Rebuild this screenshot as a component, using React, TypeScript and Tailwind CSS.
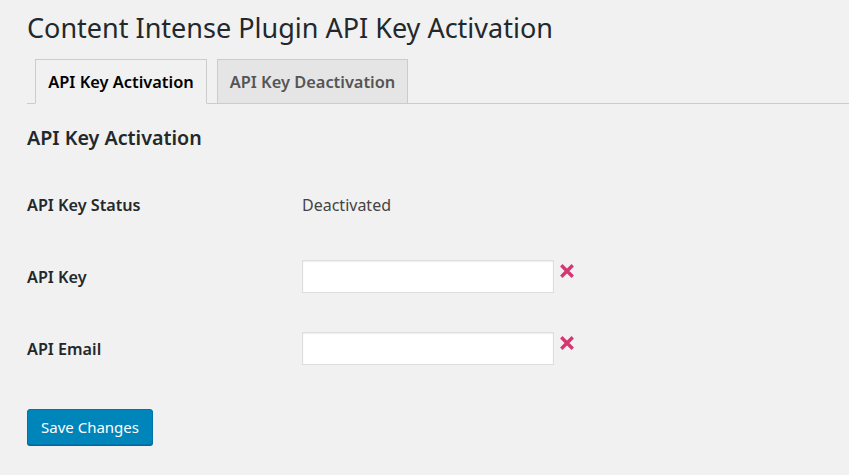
import type { ReactNode } from 'react';

const font = { fontFamily: '"Noto Sans", "Open Sans", Arial, sans-serif' };

const RemoveIcon = (): ReactNode => (
  <svg width="14" height="14" viewBox="0 0 14 14" aria-hidden="true" className="mt-[3px] ml-[6px] shrink-0">
    <path d="M2.5 2.5 L11.5 11.5 M11.5 2.5 L2.5 11.5" stroke="#d63672" strokeWidth="3.4" strokeLinecap="square" />
  </svg>
);

const FieldRow = ({ label, children }: { label: string; children: ReactNode }): ReactNode => (
  <div className="flex h-[72px] items-center">
    <div className="w-[275px] text-[16.2px] font-semibold text-[#23282d]">{label}</div>
    <div className="flex items-start">{children}</div>
  </div>
);

export default function App(): ReactNode {
  return (
    <div style={font} className="min-h-[475px] w-[849px] overflow-hidden bg-[#f1f1f1] pl-[27px]">
      <h1 className="pt-[10px] text-[27px] leading-[36px] font-normal text-[#23282d]">
        Content Intense Plugin API Key Activation
      </h1>

      {/* tabs */}
      <nav className="mt-[13px] flex h-[45px] items-end gap-[10px] border-b border-[#cccccc] pl-[8px]">
        <a className="-mb-px flex h-[45px] w-[172px] items-center justify-center border border-b-[#f1f1f1] border-[#cccccc] bg-[#f1f1f1] pt-[2px] text-[16.4px] font-semibold text-[#000000]">
          API Key Activation
        </a>
        <a className="flex h-[44px] w-[191px] items-center justify-center border border-b-0 border-[#cccccc] bg-[#e5e5e5] pt-[2px] text-[16.4px] font-semibold text-[#555555]">
          API Key Deactivation
        </a>
      </nav>

      <h2 className="mt-[20px] text-[19.7px] leading-[28px] font-semibold text-[#23282d]">API Key Activation</h2>

      <div className="mt-[17px]">
        <FieldRow label="API Key Status">
          <span className="text-[16px] text-[#444444]">Deactivated</span>
        </FieldRow>
        <FieldRow label="API Key">
          <input
            type="text"
            className="-mt-px h-[33px] w-[252px] border border-[#dddddd] bg-white px-2 shadow-[inset_0_1px_2px_rgba(0,0,0,0.07)] outline-none"
          />
          <RemoveIcon />
        </FieldRow>
        <FieldRow label="API Email">
          <input
            type="text"
            className="-mt-px h-[33px] w-[252px] border border-[#dddddd] bg-white px-2 shadow-[inset_0_1px_2px_rgba(0,0,0,0.07)] outline-none"
          />
          <RemoveIcon />
        </FieldRow>
      </div>

      <button
        type="button"
        className="mt-[24px] h-[36px] w-[126px] rounded-[3px] border border-[#0073aa] bg-[#0085ba] text-[15px] text-white shadow-[0_1px_0_#006799]"
      >
        Save Changes
      </button>
    </div>
  );
}
